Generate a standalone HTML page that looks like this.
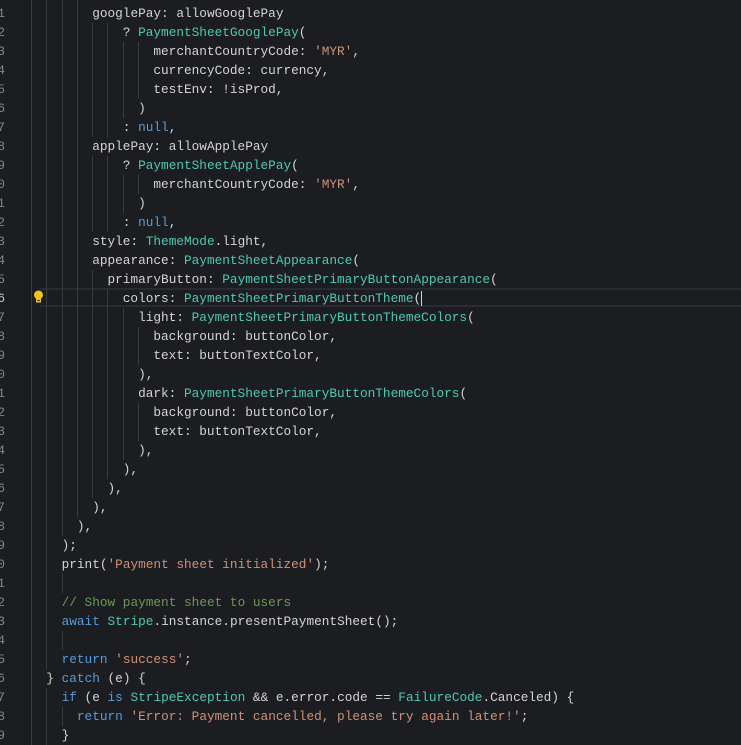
<!DOCTYPE html>
<html><head><meta charset="utf-8"><style>
body{margin:0;width:741px;height:736px;overflow:hidden;background:#1c1d21;position:relative;font-family:"Liberation Mono",monospace;font-size:12.75px;color:#d4d4d4}
.l{position:absolute;left:31px;height:19px;line-height:19px;white-space:pre}
.g{display:inline-block;width:2ch;height:19px;border-left:1px solid #3a3b40;box-sizing:border-box;vertical-align:top}
.n{position:absolute;right:736px;height:19px;line-height:19px;color:#858585;text-align:right}
.t{color:#4ec9b0}.s{color:#ce9178}.k{color:#569cd6}.c{color:#6a9955}
.hl{position:absolute;left:40px;right:0;top:287.5px;height:19px;border-top:2px solid #2a2b30;border-bottom:2px solid #2a2b30;box-sizing:border-box}
</style></head><body>
<div class="hl"></div>
<div class="n" style="top:3.5px">1</div><div class="n" style="top:22.5px">2</div><div class="n" style="top:41.5px">3</div><div class="n" style="top:60.5px">4</div><div class="n" style="top:79.5px">5</div><div class="n" style="top:98.5px">6</div><div class="n" style="top:117.5px">7</div><div class="n" style="top:136.5px">8</div><div class="n" style="top:155.5px">9</div><div class="n" style="top:174.5px">0</div><div class="n" style="top:193.5px">1</div><div class="n" style="top:212.5px">2</div><div class="n" style="top:231.5px">3</div><div class="n" style="top:250.5px">4</div><div class="n" style="top:269.5px">5</div><div class="n" style="top:288.5px;color:#c6c6c6">6</div><div class="n" style="top:307.5px">7</div><div class="n" style="top:326.5px">8</div><div class="n" style="top:345.5px">9</div><div class="n" style="top:364.5px">0</div><div class="n" style="top:383.5px">1</div><div class="n" style="top:402.5px">2</div><div class="n" style="top:421.5px">3</div><div class="n" style="top:440.5px">4</div><div class="n" style="top:459.5px">5</div><div class="n" style="top:478.5px">6</div><div class="n" style="top:497.5px">7</div><div class="n" style="top:516.5px">8</div><div class="n" style="top:535.5px">9</div><div class="n" style="top:554.5px">0</div><div class="n" style="top:573.5px">1</div><div class="n" style="top:592.5px">2</div><div class="n" style="top:611.5px">3</div><div class="n" style="top:630.5px">4</div><div class="n" style="top:649.5px">5</div><div class="n" style="top:668.5px">6</div><div class="n" style="top:687.5px">7</div><div class="n" style="top:706.5px">8</div><div class="n" style="top:725.5px">9</div>
<svg style="position:absolute;left:33px;top:290px" width="11" height="14" viewBox="0 0 11 14"><circle cx="5.5" cy="5" r="4.5" fill="#f0c419"/><rect x="3" y="9" width="5" height="3.5" fill="#f0c419"/><rect x="4" y="10" width="3" height="1" fill="#333"/></svg>
<div class="l" style="top:-15.5px"><span class="g"></span><span class="g"></span><span class="g"></span><span class="g"></span></div>
<div class="l" style="top:3.5px"><span class="g"></span><span class="g"></span><span class="g"></span><span class="g"></span>googlePay: allowGooglePay</div>
<div class="l" style="top:22.5px"><span class="g"></span><span class="g"></span><span class="g"></span><span class="g"></span><span class="g"></span><span class="g"></span>? <span class="t">PaymentSheetGooglePay</span>(</div>
<div class="l" style="top:41.5px"><span class="g"></span><span class="g"></span><span class="g"></span><span class="g"></span><span class="g"></span><span class="g"></span><span class="g"></span><span class="g"></span>merchantCountryCode: <span class="s">'MYR'</span>,</div>
<div class="l" style="top:60.5px"><span class="g"></span><span class="g"></span><span class="g"></span><span class="g"></span><span class="g"></span><span class="g"></span><span class="g"></span><span class="g"></span>currencyCode: currency,</div>
<div class="l" style="top:79.5px"><span class="g"></span><span class="g"></span><span class="g"></span><span class="g"></span><span class="g"></span><span class="g"></span><span class="g"></span><span class="g"></span>testEnv: !isProd,</div>
<div class="l" style="top:98.5px"><span class="g"></span><span class="g"></span><span class="g"></span><span class="g"></span><span class="g"></span><span class="g"></span><span class="g"></span>)</div>
<div class="l" style="top:117.5px"><span class="g"></span><span class="g"></span><span class="g"></span><span class="g"></span><span class="g"></span><span class="g"></span>: <span class="k">null</span>,</div>
<div class="l" style="top:136.5px"><span class="g"></span><span class="g"></span><span class="g"></span><span class="g"></span>applePay: allowApplePay</div>
<div class="l" style="top:155.5px"><span class="g"></span><span class="g"></span><span class="g"></span><span class="g"></span><span class="g"></span><span class="g"></span>? <span class="t">PaymentSheetApplePay</span>(</div>
<div class="l" style="top:174.5px"><span class="g"></span><span class="g"></span><span class="g"></span><span class="g"></span><span class="g"></span><span class="g"></span><span class="g"></span><span class="g"></span>merchantCountryCode: <span class="s">'MYR'</span>,</div>
<div class="l" style="top:193.5px"><span class="g"></span><span class="g"></span><span class="g"></span><span class="g"></span><span class="g"></span><span class="g"></span><span class="g"></span>)</div>
<div class="l" style="top:212.5px"><span class="g"></span><span class="g"></span><span class="g"></span><span class="g"></span><span class="g"></span><span class="g"></span>: <span class="k">null</span>,</div>
<div class="l" style="top:231.5px"><span class="g"></span><span class="g"></span><span class="g"></span><span class="g"></span>style: <span class="t">ThemeMode</span>.light,</div>
<div class="l" style="top:250.5px"><span class="g"></span><span class="g"></span><span class="g"></span><span class="g"></span>appearance: <span class="t">PaymentSheetAppearance</span>(</div>
<div class="l" style="top:269.5px"><span class="g"></span><span class="g"></span><span class="g"></span><span class="g"></span><span class="g"></span>primaryButton: <span class="t">PaymentSheetPrimaryButtonAppearance</span>(</div>
<div class="l" style="top:288.5px"><span class="g"></span><span class="g"></span><span class="g"></span><span class="g"></span><span class="g"></span><span class="g"></span>colors: <span class="t">PaymentSheetPrimaryButtonTheme</span>(<span style="border-left:1px solid #d4d4d4"></span></div>
<div class="l" style="top:307.5px"><span class="g"></span><span class="g"></span><span class="g"></span><span class="g"></span><span class="g"></span><span class="g"></span><span class="g"></span>light: <span class="t">PaymentSheetPrimaryButtonThemeColors</span>(</div>
<div class="l" style="top:326.5px"><span class="g"></span><span class="g"></span><span class="g"></span><span class="g"></span><span class="g"></span><span class="g"></span><span class="g"></span><span class="g"></span>background: buttonColor,</div>
<div class="l" style="top:345.5px"><span class="g"></span><span class="g"></span><span class="g"></span><span class="g"></span><span class="g"></span><span class="g"></span><span class="g"></span><span class="g"></span>text: buttonTextColor,</div>
<div class="l" style="top:364.5px"><span class="g"></span><span class="g"></span><span class="g"></span><span class="g"></span><span class="g"></span><span class="g"></span><span class="g"></span>),</div>
<div class="l" style="top:383.5px"><span class="g"></span><span class="g"></span><span class="g"></span><span class="g"></span><span class="g"></span><span class="g"></span><span class="g"></span>dark: <span class="t">PaymentSheetPrimaryButtonThemeColors</span>(</div>
<div class="l" style="top:402.5px"><span class="g"></span><span class="g"></span><span class="g"></span><span class="g"></span><span class="g"></span><span class="g"></span><span class="g"></span><span class="g"></span>background: buttonColor,</div>
<div class="l" style="top:421.5px"><span class="g"></span><span class="g"></span><span class="g"></span><span class="g"></span><span class="g"></span><span class="g"></span><span class="g"></span><span class="g"></span>text: buttonTextColor,</div>
<div class="l" style="top:440.5px"><span class="g"></span><span class="g"></span><span class="g"></span><span class="g"></span><span class="g"></span><span class="g"></span><span class="g"></span>),</div>
<div class="l" style="top:459.5px"><span class="g"></span><span class="g"></span><span class="g"></span><span class="g"></span><span class="g"></span><span class="g"></span>),</div>
<div class="l" style="top:478.5px"><span class="g"></span><span class="g"></span><span class="g"></span><span class="g"></span><span class="g"></span>),</div>
<div class="l" style="top:497.5px"><span class="g"></span><span class="g"></span><span class="g"></span><span class="g"></span>),</div>
<div class="l" style="top:516.5px"><span class="g"></span><span class="g"></span><span class="g"></span>),</div>
<div class="l" style="top:535.5px"><span class="g"></span><span class="g"></span>);</div>
<div class="l" style="top:554.5px"><span class="g"></span><span class="g"></span>print(<span class="s">'Payment sheet initialized'</span>);</div>
<div class="l" style="top:573.5px"><span class="g"></span><span class="g"></span><span class="g"></span></div>
<div class="l" style="top:592.5px"><span class="g"></span><span class="g"></span><span class="c">// Show payment sheet to users</span></div>
<div class="l" style="top:611.5px"><span class="g"></span><span class="g"></span><span class="k">await</span> <span class="t">Stripe</span>.instance.presentPaymentSheet();</div>
<div class="l" style="top:630.5px"><span class="g"></span><span class="g"></span><span class="g"></span></div>
<div class="l" style="top:649.5px"><span class="g"></span><span class="g"></span><span class="k">return</span> <span class="s">'success'</span>;</div>
<div class="l" style="top:668.5px"><span class="g"></span>} <span class="k">catch</span> (e) {</div>
<div class="l" style="top:687.5px"><span class="g"></span><span class="g"></span><span class="k">if</span> (e <span class="k">is</span> <span class="t">StripeException</span> &amp;&amp; e.error.code == <span class="t">FailureCode</span>.Canceled) {</div>
<div class="l" style="top:706.5px"><span class="g"></span><span class="g"></span><span class="g"></span><span class="k">return</span> <span class="s">'Error: Payment cancelled, please try again later!'</span>;</div>
<div class="l" style="top:725.5px"><span class="g"></span><span class="g"></span>}</div>
</body></html>
